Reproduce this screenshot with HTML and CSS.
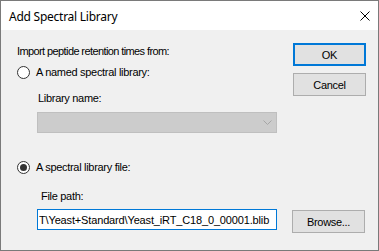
FILE: index.html
```html
<!DOCTYPE html>
<html>
<head>
<meta charset="utf-8">
<link rel="stylesheet" href="styles.css">
</head>
<body>
<div class="window">
  <div class="titlebar">
    <span class="title">Add Spectral Library</span>
    <svg class="close" width="10" height="10" viewBox="0 0 10 10"><path d="M0.5 0.5 L9.5 9.5 M9.5 0.5 L0.5 9.5" stroke="#000" stroke-width="1" fill="none"/></svg>
  </div>
  <div class="body">
    <div class="top">
      <div class="options">
        <div class="label intro">Import peptide retention times from:</div>
        <label class="radio-row first">
          <span class="radio"></span>
          <span class="radio-text">A named spectral library:</span>
        </label>
        <div class="label lib-label">Library name:</div>
        <div class="combo">
          <svg class="chev" width="9" height="5" viewBox="0 0 9 5"><path d="M0.5 0.5 L4.5 4.5 L8.5 0.5" stroke="#a6a6a6" stroke-width="1" fill="none"/></svg>
        </div>
      </div>
      <div class="actions">
        <div class="btn default">OK</div>
        <div class="btn">Cancel</div>
      </div>
    </div>
    <label class="radio-row second">
      <span class="radio checked"></span>
      <span class="radio-text">A spectral library file:</span>
    </label>
    <div class="label file-label">File path:</div>
    <div class="file-row">
      <div class="textbox"><span class="path">T\Yeast+Standard\Yeast_iRT_C18_0_00001.blib</span></div>
      <div class="btn browse">Browse...</div>
    </div>
  </div>
</div>
</body>
</html>
```

FILE: styles.css
```css
html, body {
  margin: 0;
  padding: 0;
  background: #f0f0f0;
}
.window {
  width: 379px;
  height: 251px;
  box-sizing: border-box;
  border: 1px solid #7a7a7a;
  background: #f0f0f0;
  font-family: "Liberation Sans", Arial, sans-serif;
  font-size: 11px;
  color: #000;
  overflow: hidden;
}
.titlebar {
  height: 29px;
  background: #fff;
  display: flex;
  align-items: center;
  padding-left: 8px;
  padding-right: 8px;
}
.title {
  font-family: "Noto Sans", sans-serif;
  font-size: 12px;
  letter-spacing: -0.25px;
  color: #000;
  margin-top: 1px;
}
.close {
  margin-left: auto;
  display: block;
}
.body {
  padding: 13px 12px 0 16px;
}
.top {
  display: flex;
}
.options {
  flex: 1;
  padding-top: 2px;
}
.label {
  line-height: 13px;
  height: 13px;
  letter-spacing: -0.3px;
  white-space: nowrap;
}
.label.intro {
  letter-spacing: -0.6px;
}
.radio-row {
  display: flex;
  align-items: center;
  height: 13px;
}
.radio-row.first {
  margin-top: 8px;
}
.radio-row.second {
  margin-top: 28px;
}
.radio {
  width: 13px;
  height: 13px;
  box-sizing: border-box;
  border: 1px solid #333;
  border-radius: 50%;
  background: #fff;
  display: flex;
  align-items: center;
  justify-content: center;
  flex: none;
}
.radio.checked::after {
  content: "";
  width: 7px;
  height: 7px;
  border-radius: 50%;
  background: #333;
}
.radio-text {
  margin-left: 6px;
  letter-spacing: -0.3px;
  line-height: 13px;
  white-space: nowrap;
}
.lib-label {
  margin-top: 13px;
  margin-left: 21px;
}
.combo {
  margin-top: 7px;
  margin-left: 20px;
  width: 240px;
  height: 21px;
  box-sizing: border-box;
  background: #cccccc;
  border: 1px solid #bfbfbf;
  display: flex;
  align-items: center;
  justify-content: flex-end;
  padding-right: 4px;
}
.chev {
  display: block;
}
.actions {
  width: 73px;
  display: flex;
  flex-direction: column;
  gap: 7px;
}
.btn {
  width: 73px;
  height: 23px;
  box-sizing: border-box;
  background: #e1e1e1;
  border: 1px solid #adadad;
  display: flex;
  align-items: center;
  justify-content: center;
  letter-spacing: -0.3px;
}
.btn.default {
  border: 2px solid #0078d7;
}
.file-label {
  margin-top: 16px;
  margin-left: 24px;
}
.file-row {
  margin-top: 6px;
  display: flex;
  align-items: flex-start;
}
.textbox {
  margin-left: 20px;
  width: 240px;
  height: 21px;
  box-sizing: border-box;
  border: 1px solid #0078d7;
  background: #fff;
  padding-left: 1px;
  display: flex;
  align-items: center;
  overflow: hidden;
  white-space: nowrap;
}
.path {
  letter-spacing: -0.15px;
}
.browse {
  margin-left: 15px;
  margin-top: 1px;
}
```
